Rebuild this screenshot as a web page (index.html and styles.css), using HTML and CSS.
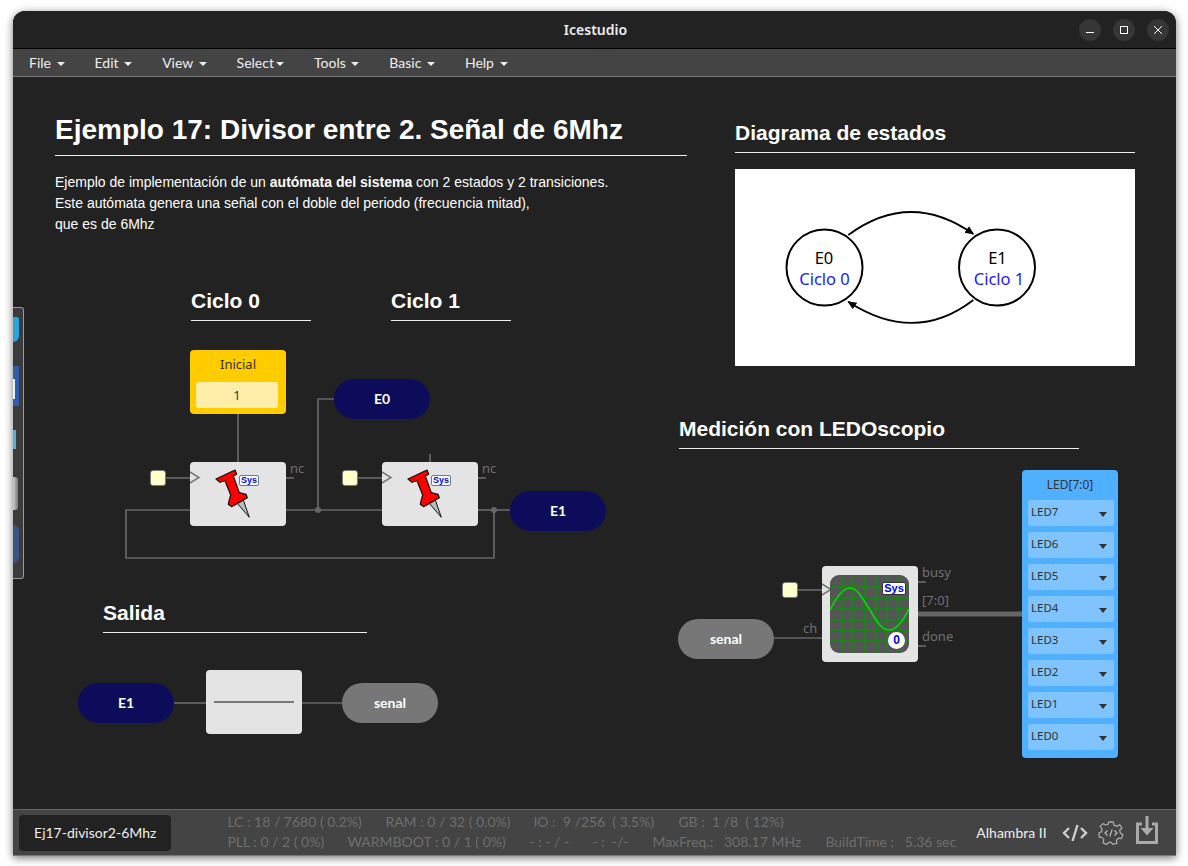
FILE: index.html
```html
<!DOCTYPE html>
<html lang="en">
<head>
    <meta charset="UTF-8">
    <meta name="viewport" content="width=device-width, initial-scale=1.0">
    <title>Icestudio</title>
    <link rel="stylesheet" href="styles.css">
</head>
<body>

    <svg class="defs" width="0" height="0">
        <defs>
            <symbol id="pin" viewBox="0 0 96 64">
                <polygon points="47.3,41.3 59.3,55.3 53.3,38" fill="#bbb" stroke="#111" stroke-width="1"/>
                <polygon points="26,17 45,8 46.7,12.3 43.3,14 49.3,30.7 56,32.3 57.3,35.7 41.7,44.7 38.3,42.3 39.3,38 40.7,33 35,18.7 30,20.3" fill="#f00" stroke="#111" stroke-width="1.2" stroke-linejoin="round"/>
            </symbol>
            <marker id="arrow" markerWidth="10" markerHeight="10" refX="8" refY="4" orient="auto" markerUnits="userSpaceOnUse">
                <path d="M0 0 L9 4 L0 8 Z" fill="#000"/>
            </marker>
        </defs>
    </svg>

    <div class="window">

        <!-- Title bar -->
        <header class="titlebar">
            <span class="titlebar__name">Icestudio</span>
            <div class="titlebar__buttons">
                <span class="titlebar__btn"><svg width="10" height="10" viewBox="0 0 10 10"><path d="M1 7.5 H9" stroke="#fff" stroke-width="1"/></svg></span>
                <span class="titlebar__btn"><svg width="10" height="10" viewBox="0 0 10 10"><rect x="1.5" y="1.5" width="7" height="7" fill="none" stroke="#fff"/></svg></span>
                <span class="titlebar__btn"><svg width="10" height="10" viewBox="0 0 10 10"><path d="M1 1 L9 9 M9 1 L1 9" stroke="#fff" stroke-width="1"/></svg></span>
            </div>
        </header>

        <!-- Menu -->
        <nav class="menu">
            <a class="menu__item">File <i class="caret"></i></a>
            <a class="menu__item">Edit <i class="caret"></i></a>
            <a class="menu__item">View <i class="caret"></i></a>
            <a class="menu__item">Select<i class="caret"></i></a>
            <a class="menu__item">Tools <i class="caret"></i></a>
            <a class="menu__item">Basic <i class="caret"></i></a>
            <a class="menu__item">Help <i class="caret"></i></a>
        </nav>

        <!-- Design canvas -->
        <main class="canvas">

            <!-- Wires, in window coordinates -->
            <svg class="wires" viewBox="13 77 1163 732" width="1163" height="732">
                <g class="wire">
                    <path d="M238 414 V462"/>
                    <path d="M166 478 H190"/>
                    <path d="M286 478 H294"/>
                    <path d="M286 510 H382"/>
                    <path d="M318 510 V399 H334"/>
                    <path d="M190 510 H126 V558 H494 V510"/>
                    <path d="M478 510 H510"/>
                    <path d="M358 478 H382"/>
                    <path d="M478 478 H486"/>
                    <path d="M430 454 V462"/>
                    <path d="M174 703 H206"/>
                    <path d="M302 703 H342"/>
                    <path d="M798 590 H822"/>
                    <path d="M774 638 H822"/>
                    <path d="M918 582 H926"/>
                    <path d="M918 646 H926"/>
                </g>
                <path class="wire-bus" d="M918 614 H1022"/>
                <circle class="wire-dot" cx="318" cy="510" r="3"/>
                <circle class="wire-dot" cx="494" cy="510" r="3"/>
            </svg>

            <!-- Notes -->
            <div class="note note--intro">
                <h1 class="note__title">Ejemplo 17: Divisor entre 2. Señal de 6Mhz</h1>
                <p class="note__text">Ejemplo de implementación de un <b>autómata del sistema</b> con 2 estados y 2 transiciones.<br>Este autómata genera una señal con el doble del periodo (frecuencia mitad),<br>que es de 6Mhz</p>
            </div>
            <h2 class="note__head note--ciclo0">Ciclo 0</h2>
            <h2 class="note__head note--ciclo1">Ciclo 1</h2>
            <h2 class="note__head note--salida">Salida</h2>
            <h2 class="note__head note--diagrama">Diagrama de estados</h2>
            <h2 class="note__head note--medicion">Medición con LEDOscopio</h2>

            <!-- State diagram -->
            <div class="states">
                <svg width="400" height="197" viewBox="0 0 400 197">
                    <circle class="states__node" cx="89.5" cy="98.5" r="38"/>
                    <circle class="states__node" cx="262" cy="98.5" r="38"/>
                    <path class="states__arc" d="M113.3 66 Q175 20.5 238.3 65" marker-end="url(#arrow)"/>
                    <path class="states__arc" d="M238.3 131 Q180 176 113.3 132.7" marker-end="url(#arrow)"/>
                    <text class="states__name" x="89" y="95">E0</text>
                    <text class="states__cycle" x="89.5" y="116">Ciclo 0</text>
                    <text class="states__name" x="262.5" y="95">E1</text>
                    <text class="states__cycle" x="264" y="116">Ciclo 1</text>
                </svg>
            </div>

            <!-- Constant -->
            <div class="constant">
                <span class="constant__label">Inicial</span>
                <span class="constant__value">1</span>
            </div>

            <!-- Ports -->
            <div class="port port--e0">E0</div>
            <div class="port port--e1">E1</div>
            <div class="port port--e1b">E1</div>
            <div class="port port--out port--senal">senal</div>
            <div class="port port--out port--senalb">senal</div>

            <!-- Clock inputs -->
            <span class="clk clk--a"></span>
            <span class="clk clk--b"></span>
            <span class="clk clk--c"></span>

            <!-- Flip flops -->
            <div class="block block--ff1">
                <svg class="block__art" width="96" height="64"><use href="#pin"/><path class="block__tick" d="M0 10 L9 15.5 L0 21"/></svg>
                <span class="sys sys--pin">Sys</span>
            </div>
            <div class="block block--ff2">
                <svg class="block__art" width="96" height="64"><use href="#pin"/><path class="block__tick" d="M0 10 L9 15.5 L0 21"/></svg>
                <span class="sys sys--pin">Sys</span>
            </div>

            <!-- Wire block -->
            <div class="block block--wire">
                <svg class="block__art" width="96" height="64"><path d="M8 32 H88" stroke="#777" stroke-width="2"/></svg>
            </div>

            <!-- LEDOscopio -->
            <div class="block block--scope">
                <svg class="block__art" width="96" height="96"><path class="block__tick" d="M0 18 L9 23.5 L0 29"/></svg>
                <div class="scope">
                    <svg width="79" height="78" viewBox="0 0 79 78">
                        <path class="scope__grid" d="M12 0 V78 M23 0 V78 M35 0 V78 M46 0 V78 M57 0 V78 M68 0 V78 M0 12 H79 M0 23 H79 M0 34 H79 M0 45 H79 M0 55 H79 M0 66 H79"/>
                        <path class="scope__wave" d="M0 35 C7 21 13 13 20 13 C28 13 33 25 40 35 C46 45 51 55 59 55 C66 55 73 46 79 34"/>
                    </svg>
                    <span class="sys sys--scope">Sys</span>
                    <span class="scope__count">0</span>
                </div>
            </div>

            <!-- Pin labels -->
            <span class="pin-label pin-label--nc1">nc</span>
            <span class="pin-label pin-label--nc2">nc</span>
            <span class="pin-label pin-label--ch">ch</span>
            <span class="pin-label pin-label--busy">busy</span>
            <span class="pin-label pin-label--bus">[7:0]</span>
            <span class="pin-label pin-label--done">done</span>

            <!-- LED outputs -->
            <div class="leds">
                <div class="leds__title">LED[7:0]</div>
                <div class="leds__row">LED7<i class="leds__arrow"></i></div>
                <div class="leds__row">LED6<i class="leds__arrow"></i></div>
                <div class="leds__row">LED5<i class="leds__arrow"></i></div>
                <div class="leds__row">LED4<i class="leds__arrow"></i></div>
                <div class="leds__row">LED3<i class="leds__arrow"></i></div>
                <div class="leds__row">LED2<i class="leds__arrow"></i></div>
                <div class="leds__row">LED1<i class="leds__arrow"></i></div>
                <div class="leds__row">LED0<i class="leds__arrow"></i></div>
            </div>

            <!-- Desktop dock peeking over the window -->
            <div class="dock">
                <span class="dock__icon dock__icon--a"></span>
                <span class="dock__icon dock__icon--b"></span>
                <span class="dock__icon dock__icon--c"></span>
                <span class="dock__icon dock__icon--d"></span>
                <span class="dock__icon dock__icon--e"></span>
            </div>
        </main>

        <!-- Status bar -->
        <footer class="status">
            <div class="status__file">Ej17-divisor2-6Mhz</div>
            <div class="status__stats">
                <div class="status__row">
                    <span class="stat stat--lc">LC : 18 / 7680 ( 0.2%)</span>
                    <span class="stat stat--ram">RAM : 0 / 32 ( 0.0%)</span>
                    <span class="stat stat--io">IO : &nbsp;9 /256 &nbsp;( 3.5%)</span>
                    <span class="stat">GB : &nbsp;1 /8 &nbsp;( 12%)</span>
                </div>
                <div class="status__row">
                    <span class="stat stat--pll">PLL : 0 / 2 ( 0%)</span>
                    <span class="stat stat--wb">WARMBOOT : 0 / 1 ( 0%)</span>
                    <span class="stat stat--dash1">- : - / -</span>
                    <span class="stat stat--dash2">- : &nbsp;-/-</span>
                    <span class="stat stat--freq">MaxFreq.: &nbsp;&nbsp;308.17 MHz</span>
                    <span class="stat">BuildTime : &nbsp;&nbsp;5.36 sec</span>
                </div>
            </div>
            <div class="status__board">Alhambra II</div>
            <div class="status__tools">
                <svg width="26" height="18" viewBox="0 0 26 18" class="tool"><path d="M7 4 L2 9 L7 14 M19 4 L24 9 L19 14 M15.5 1 L10.5 17" fill="none" stroke="#ccc" stroke-width="2.4"/></svg>
                <svg width="26" height="26" viewBox="0 0 26 26" class="tool"><path d="M10.8 2 H15.2 L16 5.2 L18.8 6.4 L21.6 4.7 L24 7.8 L21.7 10.2 L22.3 13 L24.8 14.6 L23.4 18.6 L20.4 18.2 L18.4 20.4 L18.8 23.4 L14.8 24.4 L13 22.2 L10.6 22.4 L8.6 24.6 L5 22.6 L5.8 19.6 L3.8 17.4 L1 17 L1 13 L3.6 11.6 L4 8.8 L2.2 6.4 L5 3.6 L7.8 5 L10.2 4.2 Z" fill="none" stroke="#aaa" stroke-width="1.3" stroke-linejoin="round"/><path d="M9.5 10.5 L7 13 L9.5 15.5 M16.5 10.5 L19 13 L16.5 15.5 M14.2 9.5 L11.8 16.5" fill="none" stroke="#bbb" stroke-width="1.2"/></svg>
                <svg width="22" height="28" viewBox="0 0 22 28" class="tool tool--save"><path d="M6 8 H1.5 V26.5 H20.5 V8 H16" fill="none" stroke="#aaa" stroke-width="3"/><path d="M11 0 V13" stroke="#aaa" stroke-width="3"/><path d="M4.5 12 H17.5 L11 19.5 Z" fill="#aaa"/></svg>
            </div>
        </footer>
    </div>

</body>
</html>
```

FILE: styles.css
```css
html, body {
    margin: 0;
    padding: 0;
    background-color: #fff;
}

body {
    height: 866px;
    overflow: hidden;
    font-family: 'Lato', sans-serif;
}

.defs {
    position: absolute;
}

.window {
    margin: 11px 0 0 13px;
    width: 1163px;
    height: 845px;
    display: flex;
    flex-direction: column;
    background-color: #222;
    border-radius: 12px 12px 0 0;
    box-shadow: 0 2px 8px rgba(0, 0, 0, 0.55);
    overflow: hidden;
}

/* Title bar */
.titlebar {
    position: relative;
    flex: 0 0 37px;
    display: flex;
    align-items: center;
    justify-content: center;
    background-color: #222;
    border-bottom: 1px solid #000;
}

.titlebar__name {
    padding-left: 2px;
    color: #eee;
    font-family: 'Noto Sans', sans-serif;
    font-size: 14px;
    font-weight: 600;
}

.titlebar__buttons {
    position: absolute;
    top: 8px;
    right: 7px;
    display: flex;
    gap: 12px;
}

.titlebar__btn {
    width: 22px;
    height: 22px;
    display: flex;
    align-items: center;
    justify-content: center;
    border-radius: 50%;
    background-color: #363636;
}

/* Menu */
.menu {
    flex: 0 0 27px;
    display: flex;
    align-items: center;
    padding-left: 1px;
    background-color: #444;
    border-bottom: 1px solid #777;
}

.menu__item {
    padding: 0 15px;
    color: #eee;
    font-size: 14px;
}

.caret {
    display: inline-block;
    width: 0;
    height: 0;
    margin-left: 2px;
    vertical-align: 2px;
    border-top: 4px solid #eee;
    border-left: 4px solid transparent;
    border-right: 4px solid transparent;
}

/* Canvas */
.canvas {
    position: relative;
    flex: 1;
    background-color: #222;
}

.wires {
    position: absolute;
    top: 0;
    left: 0;
}

.wire path {
    fill: none;
    stroke: #666;
    stroke-width: 1.7;
}

.wire-bus {
    fill: none;
    stroke: #666;
    stroke-width: 5;
}

.wire-dot {
    fill: #666;
}

/* Notes */
.note {
    position: absolute;
    color: #fff;
}

.note--intro {
    left: 42px;
    top: 35px;
    width: 632px;
}

.note__title {
    margin: 0;
    padding-bottom: 8px;
    border-bottom: 1px solid #eee;
    font-family: 'Liberation Sans', sans-serif;
    font-size: 28px;
    line-height: 35px;
    font-weight: 700;
}

.note__text {
    margin: 16px 0 0;
    font-family: 'Liberation Sans', sans-serif;
    font-size: 14px;
    line-height: 21px;
}

.note__head {
    position: absolute;
    margin: 0;
    padding-bottom: 6px;
    border-bottom: 1px solid #eee;
    color: #fff;
    font-family: 'Liberation Sans', sans-serif;
    font-size: 21px;
    line-height: 27px;
    font-weight: 700;
}

.note--ciclo0 { left: 178px; top: 210px; width: 120px; }
.note--ciclo1 { left: 378px; top: 210px; width: 120px; }
.note--salida { left: 90px; top: 522px; width: 264px; }
.note--diagrama { left: 722px; top: 42px; width: 400px; }
.note--medicion { left: 666px; top: 338px; width: 400px; }

/* State diagram */
.states {
    position: absolute;
    left: 722px;
    top: 92px;
    width: 400px;
    height: 197px;
    background-color: #fff;
}

.states svg {
    display: block;
}

.states__node {
    fill: none;
    stroke: #000;
    stroke-width: 2;
}

.states__arc {
    fill: none;
    stroke: #000;
    stroke-width: 1.8;
}

.states__name, .states__cycle {
    font-family: 'Noto Sans', sans-serif;
    font-size: 16.5px;
    text-anchor: middle;
}

.states__cycle {
    fill: #1a1aff;
}

/* Constant */
.constant {
    position: absolute;
    left: 177px;
    top: 273px;
    width: 96px;
    height: 64px;
    box-sizing: border-box;
    padding: 0 8px 6px 6px;
    display: flex;
    flex-direction: column;
    background-color: #fc0;
    border-radius: 4px;
    font-family: 'Noto Sans', sans-serif;
    font-size: 13px;
    color: #333;
}

.constant__label {
    flex: 1;
    display: flex;
    align-items: center;
    justify-content: center;
    padding: 0 0 4px 2px;
}

.constant__value {
    height: 26px;
    line-height: 26px;
    text-align: center;
    background-color: #fea;
    border-radius: 3px;
}

/* Ports */
.port {
    position: absolute;
    width: 96px;
    height: 40px;
    line-height: 40px;
    text-align: center;
    color: #fff;
    background-color: #0d0c5a;
    border-radius: 20px;
    font-family: 'Lato', sans-serif;
    font-size: 14px;
    font-weight: 700;
}

.port--out {
    background-color: #777;
}

.port--e0 { left: 321px; top: 302px; }
.port--e1 { left: 497px; top: 414px; }
.port--e1b { left: 65px; top: 606px; }
.port--senal { left: 329px; top: 606px; }
.port--senalb { left: 665px; top: 542px; }

/* Clock inputs */
.clk {
    position: absolute;
    width: 16px;
    height: 16px;
    box-sizing: border-box;
    background-color: #ffc;
    border: 1px solid #777;
    border-radius: 3px;
}

.clk--a { left: 137px; top: 393px; }
.clk--b { left: 329px; top: 393px; }
.clk--c { left: 769px; top: 505px; }

/* Blocks */
.block {
    position: absolute;
    width: 96px;
    height: 64px;
    background-color: #e4e4e4;
    border-radius: 4px;
}

.block__art {
    position: absolute;
    top: 0;
    left: 0;
}

.block__tick {
    fill: none;
    stroke: #777;
    stroke-width: 1.5;
}

.block--ff1 { left: 177px; top: 385px; }
.block--ff2 { left: 369px; top: 385px; }
.block--wire { left: 193px; top: 593px; }
.block--scope { left: 809px; top: 489px; height: 96px; }

.sys {
    position: absolute;
    box-sizing: border-box;
    color: #00f;
    background-color: #fff;
    border: 1px solid #777;
    border-radius: 2px;
    text-align: center;
    font-family: 'Liberation Sans', sans-serif;
    font-weight: 700;
}

.sys--pin {
    left: 49px;
    top: 13px;
    width: 20px;
    height: 11px;
    font-size: 9px;
    line-height: 9px;
}

.sys--scope {
    left: 52px;
    top: 7px;
    width: 24px;
    height: 13px;
    border-color: #333;
    font-size: 11px;
    line-height: 11px;
}

.scope {
    position: absolute;
    left: 8px;
    top: 9px;
    width: 79px;
    height: 78px;
    background-color: #555;
    border-radius: 9px;
    overflow: hidden;
}

.scope svg {
    display: block;
}

.scope__grid {
    fill: none;
    stroke: #0a900a;
    stroke-width: 1.4;
}

.scope__wave {
    fill: none;
    stroke: #0d0;
    stroke-width: 1.6;
}

.scope__count {
    position: absolute;
    left: 58px;
    top: 57px;
    width: 17px;
    height: 17px;
    line-height: 17px;
    text-align: center;
    color: #00f;
    background-color: #fff;
    border-radius: 50%;
    font-family: 'Liberation Sans', sans-serif;
    font-size: 12px;
    font-weight: 700;
}

/* Pin labels */
.pin-label {
    position: absolute;
    color: #707070;
    font-family: 'Noto Sans', sans-serif;
    font-size: 13px;
    line-height: 16px;
}

.pin-label--nc1 { left: 277px; top: 383px; }
.pin-label--nc2 { left: 469px; top: 383px; }
.pin-label--ch { left: 790px; top: 543px; }
.pin-label--busy { left: 909px; top: 487px; }
.pin-label--bus { left: 909px; top: 515px; }
.pin-label--done { left: 909px; top: 551px; }

/* LED outputs */
.leds {
    position: absolute;
    left: 1009px;
    top: 393px;
    width: 96px;
    height: 288px;
    box-sizing: border-box;
    padding: 0 4px 0 6px;
    background-color: #4fb0ff;
    border-radius: 4px;
    color: #333;
    font-family: 'Noto Sans', sans-serif;
    font-size: 11.5px;
}

.leds__title {
    height: 30px;
    line-height: 29px;
    text-align: center;
    padding-right: 2px;
    font-size: 12px;
}

.leds__row {
    position: relative;
    height: 26px;
    margin-bottom: 6px;
    padding-left: 3px;
    line-height: 23px;
    background-color: #80c4ff;
    border-radius: 3px;
}

.leds__arrow {
    position: absolute;
    right: 7px;
    top: 12px;
    width: 0;
    height: 0;
    border-top: 5px solid #333;
    border-left: 4px solid transparent;
    border-right: 4px solid transparent;
}

/* Dock */
.dock {
    position: absolute;
    left: 0;
    top: 230px;
    width: 11px;
    height: 272px;
    box-sizing: border-box;
    background-color: #3b3b3b;
    border: 1px solid #999;
    border-left: none;
    border-radius: 0 3px 3px 0;
}

.dock__icon {
    position: absolute;
    left: 0;
}

.dock__icon--a { top: 9px; width: 6px; height: 25px; background-color: #2aa4dc; border-radius: 0 3px 8px 0; }
.dock__icon--b { top: 58px; width: 6px; height: 40px; background-color: #2f5cb0; border-left: none; }
.dock__icon--b::after {
    content: '';
    position: absolute;
    left: 0;
    top: 13px;
    width: 2px;
    height: 20px;
    background-color: #eee;
}
.dock__icon--c { top: 122px; width: 3px; height: 19px; background-color: #4ab7de; }
.dock__icon--d { top: 169px; width: 5px; height: 33px; background: linear-gradient(90deg, #ccc, #777); border-radius: 0 3px 3px 0; }
.dock__icon--e { top: 217px; width: 6px; height: 38px; background-color: #3a5585; border-radius: 0 19px 19px 0; }

/* Status bar */
.status {
    flex: 0 0 47px;
    box-sizing: border-box;
    display: flex;
    align-items: center;
    padding: 0 18px 0 6px;
    background-color: #444;
    border-top: 1px solid #666;
    border-bottom: 1px solid #777;
}

.status__file {
    width: 153px;
    height: 36px;
    line-height: 35px;
    text-align: center;
    color: #eee;
    background-color: #222;
    border-radius: 4px;
    font-size: 14px;
}

.status__stats {
    margin: -2px 0 0 56px;
    width: 740px;
    color: #6e6e6e;
    font-size: 14px;
    line-height: 20px;
}

.status__row {
    display: flex;
    white-space: nowrap;
}

.stat--lc { width: 158px; }
.stat--ram { width: 148px; }
.stat--io { width: 145px; }
.stat--pll { width: 120px; }
.stat--wb { width: 182px; }
.stat--dash1 { width: 63px; }
.stat--dash2 { width: 60px; }
.stat--freq { width: 173px; }

.status__board {
    margin-left: 12px;
    width: 86px;
    color: #eee;
    font-size: 14px;
}

.status__tools {
    display: flex;
    align-items: center;
}

.tool {
    display: block;
    margin-right: 10px;
}

.tool--save {
    margin: -6px 0 0 2px;
}
```
